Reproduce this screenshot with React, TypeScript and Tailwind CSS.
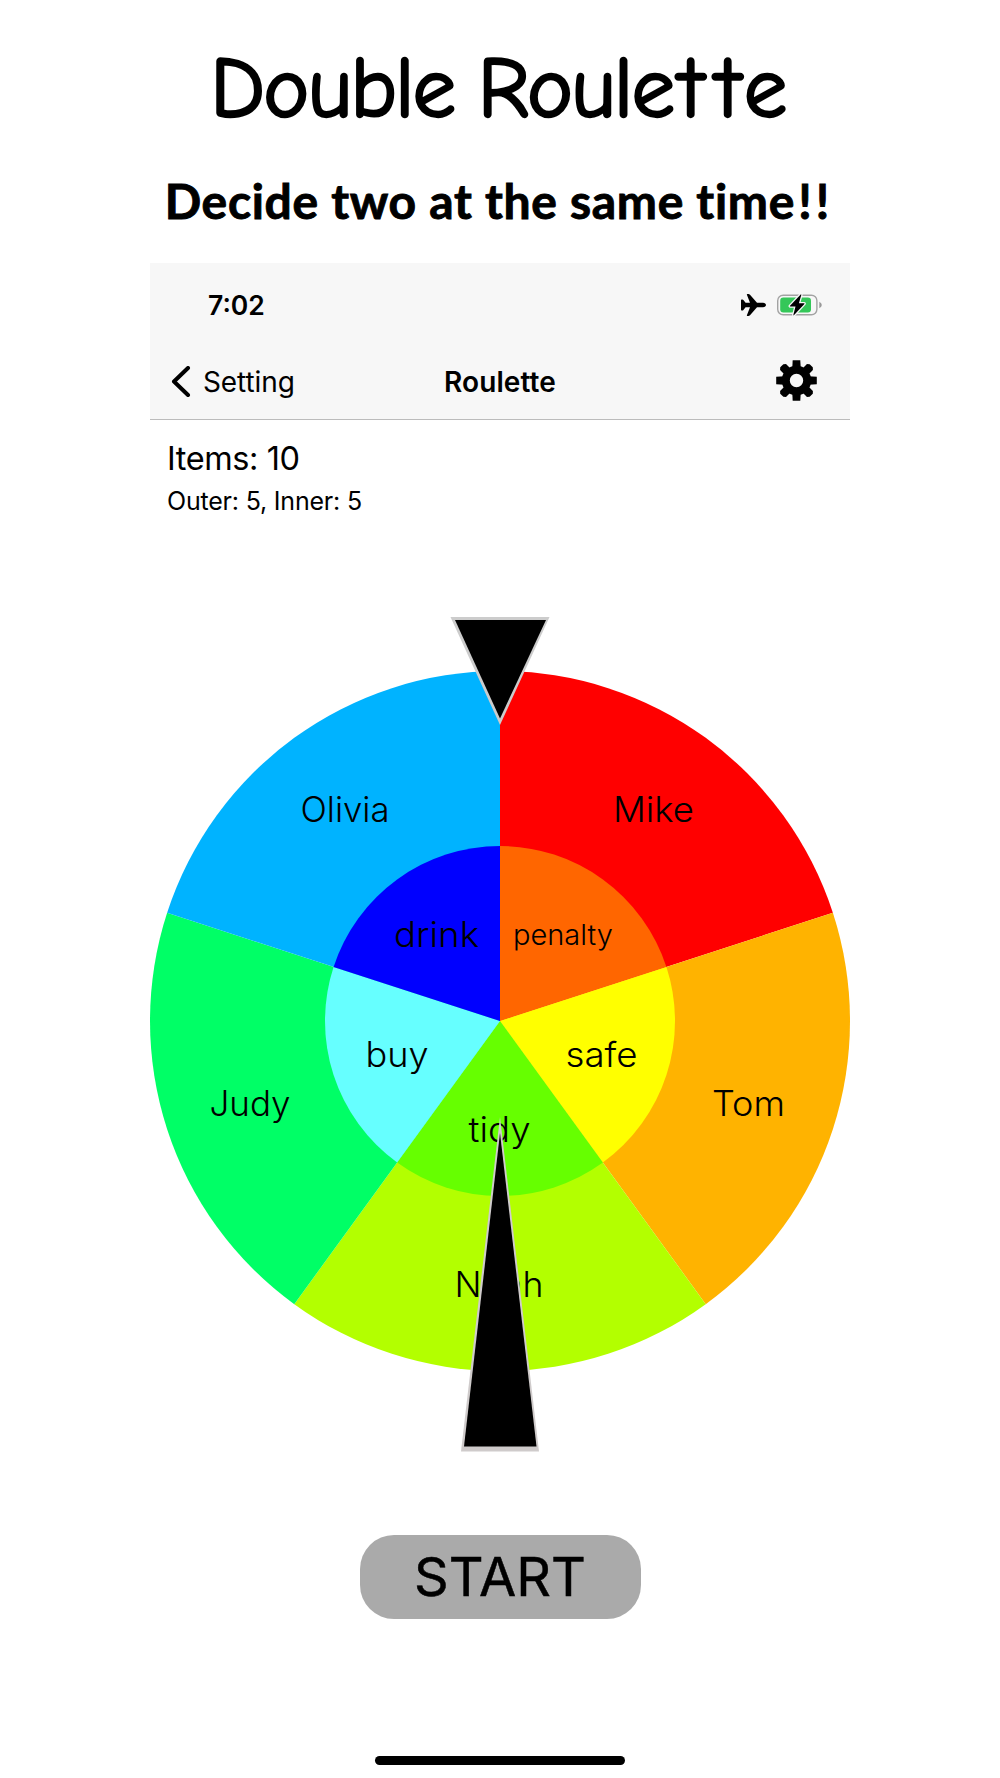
interface Slice {
  label: string;
  color: string;
  x: number;
  y: number;
  width: number;
  size?: number;
}

const CX = 350;
const CY = 404;

// Slices go clockwise from the top, x is the left edge of the label
const outer: Slice[] = [
  { label: "Mike", color: "#ff0000", x: 463, y: 205, width: 81 },
  { label: "Tom", color: "#ffb300", x: 562, y: 498.5, width: 73 },
  { label: "Noah", color: "#b3ff00", x: 304.5, y: 679.5, width: 89 },
  { label: "Judy", color: "#00ff66", x: 59.5, y: 498.5, width: 81 },
  { label: "Olivia", color: "#00b3ff", x: 150.5, y: 205, width: 89 },
];

const inner: Slice[] = [
  { label: "penalty", color: "#ff6600", x: 363, y: 328, width: 100, size: 28 },
  { label: "safe", color: "#ffff00", x: 415.5, y: 450, width: 72 },
  { label: "tidy", color: "#66ff00", x: 318.5, y: 524.5, width: 62 },
  { label: "buy", color: "#66ffff", x: 215.5, y: 450, width: 63 },
  { label: "drink", color: "#0000ff", x: 244, y: 330, width: 85 },
];

function slicePath(index: number, count: number, r: number) {
  const a = (index / count) * Math.PI * 2;
  const b = ((index + 1) / count) * Math.PI * 2;
  return `M${CX} ${CY} L${CX + r * Math.sin(a)} ${CY - r * Math.cos(a)} A${r} ${r} 0 0 1 ${CX + r * Math.sin(b)} ${CY - r * Math.cos(b)} Z`;
}

function Ring({ slices, r }: { slices: Slice[]; r: number }) {
  return (
    <g>
      {slices.map((s, i) => (
        <path key={s.label} d={slicePath(i, slices.length, r)} fill={s.color} />
      ))}
      {slices.map((s) => (
        <text
          key={s.label}
          x={s.x}
          y={s.y}
          fontSize={s.size ?? 35}
          textLength={s.width}
          lengthAdjust="spacingAndGlyphs"
          className="fill-black font-light"
        >
          {s.label}
        </text>
      ))}
    </g>
  );
}

function Wheel() {
  return (
    <svg width="700" height="836" viewBox="0 0 700 836" className="block">
      <Ring slices={outer} r={350} />
      <Ring slices={inner} r={175} />
      <path d="M300.5 0H399.5L350 108Z" fill="#cccccc" />
      <path d="M305 3H396L350 101.5Z" />
      <path d="M350 500L389 834.5H311Z" fill="#cfcbcb" />
      <path d="M350 516L386.5 829.5H314Z" />
    </svg>
  );
}

function PlaneIcon() {
  return (
    <svg width="25" height="22" viewBox="0 0 25 22">
      <path d="M22 8.7C23.8 8.9 25 9.9 25 11S23.8 13.1 22 13.3H16L9 21.2Q8.3 22 7.4 22H6.3Q5.6 22 5.9 21.2L9 13.3H4.6L2.4 15.9Q2 16.4 1.4 16.4H.6Q0 16.4 0 15.8V6.2Q0 5.6.6 5.6H1.4Q2 5.6 2.4 6.1L4.6 8.7H9L5.9.8Q5.6 0 6.3 0H7.4Q8.3 0 9 .8L16 8.7Z" />
    </svg>
  );
}

function BatteryIcon() {
  return (
    <svg width="45" height="24" viewBox="0 0 45 24">
      <rect x=".7" y="2.2" width="39.2" height="19.6" rx="5.5" fill="none" stroke="#a3a3a3" strokeWidth="1.4" />
      <path d="M42.3 8.8Q44.8 10 44.8 12T42.3 15.2Z" fill="#999999" />
      <rect x="3.2" y="4.6" width="30.8" height="14.8" rx="3.2" fill="#34c759" />
      <path
        d="M23.7 1.4L13 12.8Q12.5 13.5 13.3 13.5H18.5L16.4 21.8Q16.3 22.8 17.1 22.1L27.4 11Q27.9 10.3 27 10.3H21.9L24.3 2.1Q24.4 1.1 23.7 1.4Z"
        stroke="#f7f7f7"
        strokeWidth="2.6"
        className="[paint-order:stroke]"
      />
    </svg>
  );
}

function GearIcon() {
  return (
    <svg width="41" height="41" viewBox="-20.5 -20.5 41 41">
      <circle r="10.7" fill="none" stroke="black" strokeWidth="8" />
      {[0, 90, 180, 270].map((deg) => (
        <path key={deg} d="M-4.3 -12L-3.8 -20.3H3.8L4.3 -12Z" transform={`rotate(${deg})`} />
      ))}
      {[45, 135, 225, 315].map((deg) => (
        <path key={deg} d="M-4.2 -12L-4.2 -19L-2.2 -20.8H2.2L4.2 -19L4.2 -12Z" transform={`rotate(${deg})`} />
      ))}
    </svg>
  );
}

export default function App() {
  return (
    <div className="flex h-[1778px] w-[1000px] flex-col items-center overflow-hidden bg-white font-['Inter',sans-serif] text-black">
      <h1 className="mt-[39px] h-[100px] whitespace-nowrap pr-[4px] font-['Comic_Sans_MS','Comic_Neue','Noto_Sans',sans-serif] text-[87px] leading-[100px] tracking-[-1.7px] [font-variant-ligatures:none] [-webkit-text-stroke:2.4px_black] [word-spacing:-4px]">
        Double Roul<span className="tracking-[4px]">e</span><span className="tracking-[12px]">t</span><span className="tracking-[3px]">t</span>e
      </h1>
      <h2 className="mt-[32px] h-[60px] whitespace-nowrap pr-[2px] font-['Lato',sans-serif] text-[48px] font-bold leading-[60px] tracking-[0.7px] [font-variant-ligatures:none] [-webkit-text-stroke:0.9px_black]">
        Decide two at the same tim<span className="tracking-[4px]">e!!</span>
      </h2>

      <div className="mt-[32px] flex w-[700px] flex-col">
        <header className="flex h-[157px] flex-col border-b border-[#bcbcbc] bg-[#f7f7f7]">
          <div className="flex h-[84px] items-center pl-[58px] pr-[28px]">
            <span className="pt-[2px] text-[26.5px] font-semibold">7:02</span>
            <div className="ml-auto flex items-center gap-[11px]">
              <PlaneIcon />
              <BatteryIcon />
            </div>
          </div>
          <div className="grid h-[70px] grid-cols-3 items-center">
            <div className="flex items-center pl-[21px]">
              <svg width="21" height="33" viewBox="0 0 21 33" fill="none" stroke="black" strokeWidth="4" strokeLinecap="round" strokeLinejoin="round">
                <path d="M17 2L3 15.5L17 29" />
              </svg>
              <span className="ml-[11px] text-[28px] tracking-[-0.1px]">Setting</span>
            </div>
            <span className="text-center text-[28px] font-semibold tracking-[0.1px]">Roulette</span>
            <div className="flex justify-end pb-[3px] pr-[33px]">
              <GearIcon />
            </div>
          </div>
        </header>

        <div className="h-[197px] pl-[17px] pt-[18px]">
          <p className="h-[42px] text-[32.5px] leading-[42px] tracking-[-0.4px]">Items: 10</p>
          <p className="mt-[3px] h-[36px] text-[25px] leading-[36px] tracking-[-0.2px]">Outer: 5, Inner: 5</p>
        </div>

        <Wheel />

        <button className="mx-auto mt-[82px] h-[84px] w-[281px] rounded-[34px] bg-[#aaaaaa] text-[54px] leading-[84px] [-webkit-text-stroke:0.5px_black]">
          START
        </button>
        <div className="mx-auto mt-[137px] h-[9px] w-[250px] rounded-full bg-black" />
      </div>
    </div>
  );
}
